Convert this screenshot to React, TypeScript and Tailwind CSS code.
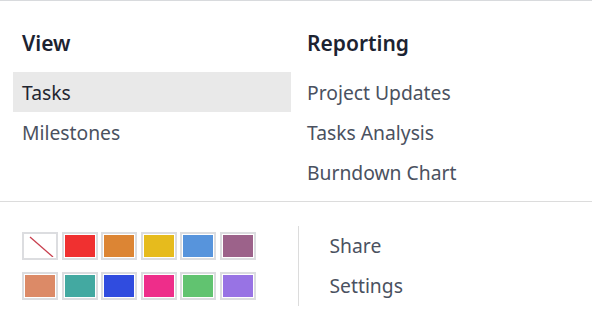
import React from 'react';

const swatches = [
  null, '#f03030', '#dc8534', '#e6bb1d', '#5794dc', '#9c628a',
  '#dc8a67', '#43a9a1', '#304cdf', '#ee2d8a', '#61c370', '#9873e4',
];

function Swatch({ color }: { color: string | null }) {
  return (
    <div className="w-[36px] h-[28px] border-2 border-[#dcdde0] bg-white p-px">
      {color ? (
        <div className="w-full h-full" style={{ backgroundColor: color }} />
      ) : (
        <svg className="w-full h-full" viewBox="0 0 30 22" preserveAspectRatio="none">
          <line x1="5" y1="2" x2="28" y2="22" stroke="#c8404f" strokeWidth="1.3" />
        </svg>
      )}
    </div>
  );
}

function Item({ label, active }: { label: string; active?: boolean }) {
  return (
    <div className={`h-10 flex items-center pt-[2px] px-[9px] ${active ? 'bg-[#e9e9e9] text-[#1f2530]' : 'text-[#4a5160]'}`}>
      {label}
    </div>
  );
}

function Heading({ children }: { children: React.ReactNode }) {
  return (
    <div className="h-10 flex items-center px-[9px] text-[21px] font-semibold text-[#1c2331] mb-[8px]">{children}</div>
  );
}

export default function App() {
  return (
    <div className="w-[592px] h-[322px] bg-white border-t border-[#d8dadd] text-[19.3px] font-['Noto_Sans',sans-serif]">
      <div className="flex gap-[7px] px-[13px] pt-[23px] pb-[9px] border-b border-[#dcdcdc]">
        <div className="w-[278px]">
          <Heading>View</Heading>
          <Item label="Tasks" active />
          <Item label="Milestones" />
        </div>
        <div className="flex-1">
          <Heading>Reporting</Heading>
          <Item label="Project Updates" />
          <Item label="Tasks Analysis" />
          <Item label="Burndown Chart" />
        </div>
      </div>
      <div className="flex pl-[22px] pt-6">
        <div className="grid grid-cols-6 gap-x-[3.5px] gap-y-[12px] self-center">
          {swatches.map((c, i) => <Swatch key={i} color={c} />)}
        </div>
        <div className="ml-[42px] border-l border-[#dcdcdc] pl-[31px] text-[#4a5160]">
          <div className="h-10 flex items-center">Share</div>
          <div className="h-10 flex items-center">Settings</div>
        </div>
      </div>
    </div>
  );
}
